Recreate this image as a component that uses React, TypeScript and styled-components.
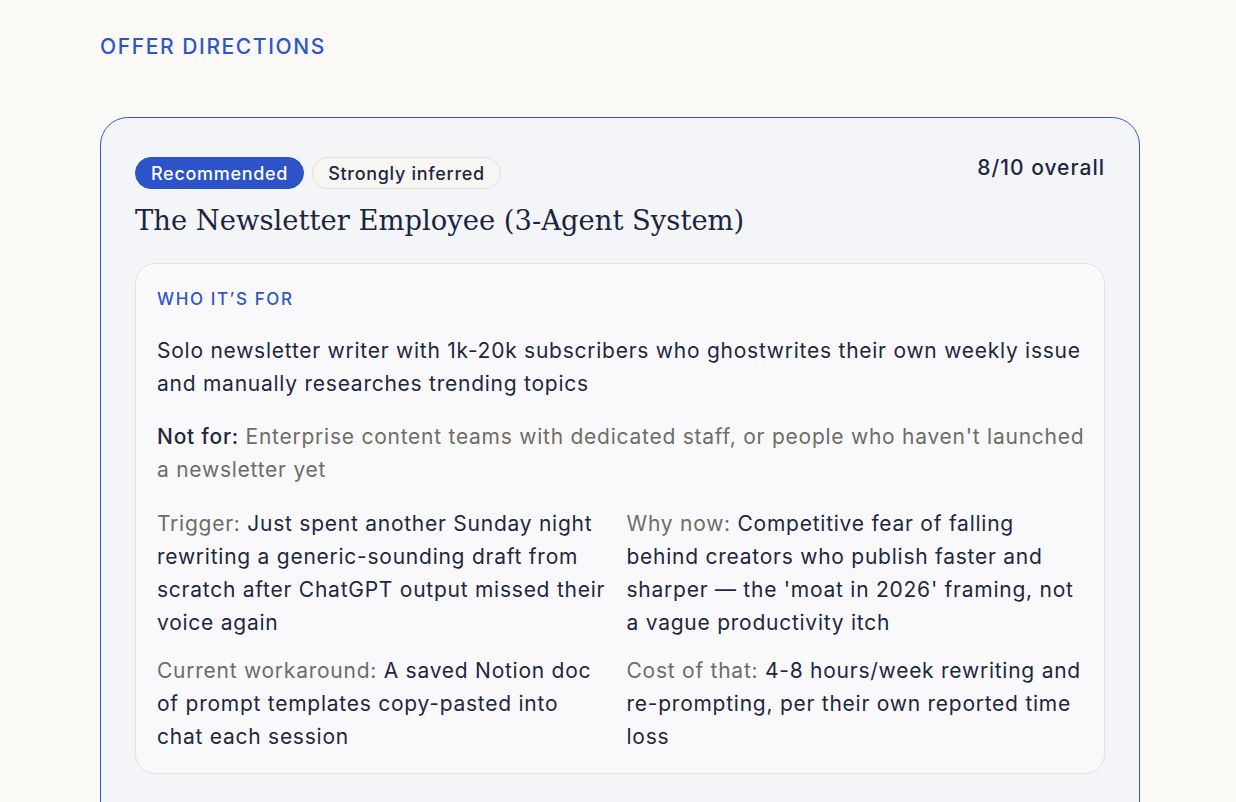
import React from 'react';
import styled, { createGlobalStyle } from 'styled-components';

const GlobalStyle = createGlobalStyle`
  html, body {
    margin: 0;
    padding: 0;
    background: #faf9f6;
  }
  body {
    font-family: Inter, "Noto Sans", sans-serif;
    color: #1e2740;
    -webkit-font-smoothing: antialiased;
  }
`;

type Detail = { label: string; text: string };

const details: Array<Detail> = [
  {
    label: 'Trigger:',
    text: 'Just spent another Sunday night rewriting a generic-sounding draft from scratch after ChatGPT output missed their voice again',
  },
  {
    label: 'Why now:',
    text: "Competitive fear of falling behind creators who publish faster and sharper \u2014 the 'moat in 2026' framing, not a vague productivity itch",
  },
  {
    label: 'Current workaround:',
    text: 'A saved Notion doc of prompt templates copy-pasted into chat each session',
  },
  {
    label: 'Cost of that:',
    text: '4-8 hours/week rewriting and re-prompting, per their own reported time loss',
  },
];

const App: React.FC = () => (
  <>
    <GlobalStyle />
    <Page>
      <SectionTitle>Offer directions</SectionTitle>
      <Card>
        <CardHeader>
          <Badges>
            <Badge variant="primary">Recommended</Badge>
            <Badge variant="outline">Strongly inferred</Badge>
          </Badges>
          <Score>8/10 overall</Score>
        </CardHeader>
        <OfferName>The Newsletter Employee (3-Agent System)</OfferName>
        <Panel>
          <PanelLabel>Who it’s for</PanelLabel>
          <Paragraph>
            Solo newsletter writer with 1k-20k subscribers who ghostwrites their own weekly issue
            and manually researches trending topics
          </Paragraph>
          <NotFor>
            <strong>Not for:</strong> Enterprise content teams with dedicated staff, or people who
            haven't launched a newsletter yet
          </NotFor>
          <DetailGrid>
            {details.map((d) => (
              <DetailItem key={d.label}>
                <DetailLabel>{d.label}</DetailLabel> {d.text}
              </DetailItem>
            ))}
          </DetailGrid>
        </Panel>
      </Card>
    </Page>
  </>
);

const Page = styled.div`
  padding: 33px 96px 0 100px;
  height: 802px;
  box-sizing: border-box;
  overflow: hidden;
`;

const SectionTitle = styled.h2`
  margin: 0 0 56px;
  font-size: 21px;
  line-height: 28px;
  font-weight: 500;
  text-transform: uppercase;
  letter-spacing: 1.6px;
  color: #2f56c6;
`;

const Card = styled.div`
  border: 1.5px solid #3558c9;
  border-radius: 28px;
  background: #f4f5f9;
  padding: 39px 34px 40px;
  min-height: 800px;
`;

const CardHeader = styled.div`
  display: flex;
  justify-content: space-between;
  align-items: flex-start;
`;

const Badges = styled.div`
  display: flex;
  gap: 8px;
`;

const Badge = styled.span<{ variant: 'primary' | 'outline' }>`
  display: inline-flex;
  align-items: center;
  height: 32px;
  padding: 0 15px;
  box-sizing: border-box;
  border-radius: 16px;
  font-size: 18px;
  font-weight: 500;
  letter-spacing: 0.7px;
  background: ${({ variant }) => (variant === 'primary' ? '#2c53c8' : '#f7f6f2')};
  color: ${({ variant }) => (variant === 'primary' ? '#ffffff' : '#1e2740')};
  border: 1.5px solid ${({ variant }) => (variant === 'primary' ? '#2c53c8' : '#e4e1d9')};
`;

const Score = styled.span`
  font-size: 21px;
  font-weight: 500;
  line-height: 22px;
  letter-spacing: 1px;
  color: #1e2740;
`;

const OfferName = styled.h3`
  margin: 14px 0 24px;
  font-family: "DejaVu Serif", "Liberation Serif", serif;
  font-size: 27.4px;
  line-height: 36px;
  font-weight: 400;
  color: #1c2540;
`;

const Panel = styled.div`
  border: 1.5px solid #e5e2da;
  border-radius: 20px;
  background: #f9f9fb;
  padding: 23px 18px 20px 21px;
`;

const PanelLabel = styled.div`
  font-size: 17px;
  line-height: 24px;
  font-weight: 500;
  text-transform: uppercase;
  letter-spacing: 1.6px;
  color: #2f56c6;
  margin-bottom: 23px;
`;

const Paragraph = styled.p`
  margin: 0 0 20px;
  font-size: 21px;
  line-height: 33px;
  letter-spacing: 0.75px;
  color: #1e2740;
`;

const NotFor = styled(Paragraph)`
  color: #6f6c66;
  margin-bottom: 21px;

  strong {
    font-weight: 500;
    color: #1e2740;
  }
`;

const DetailGrid = styled.div`
  display: grid;
  grid-template-columns: 450px 1fr;
  column-gap: 19.5px;
  row-gap: 15px;
`;

const DetailItem = styled.p`
  margin: 0;
  font-size: 21px;
  line-height: 33px;
  letter-spacing: 0.75px;
  color: #1e2740;
`;

const DetailLabel = styled.span`
  color: #6f6c66;
`;

export default App;
